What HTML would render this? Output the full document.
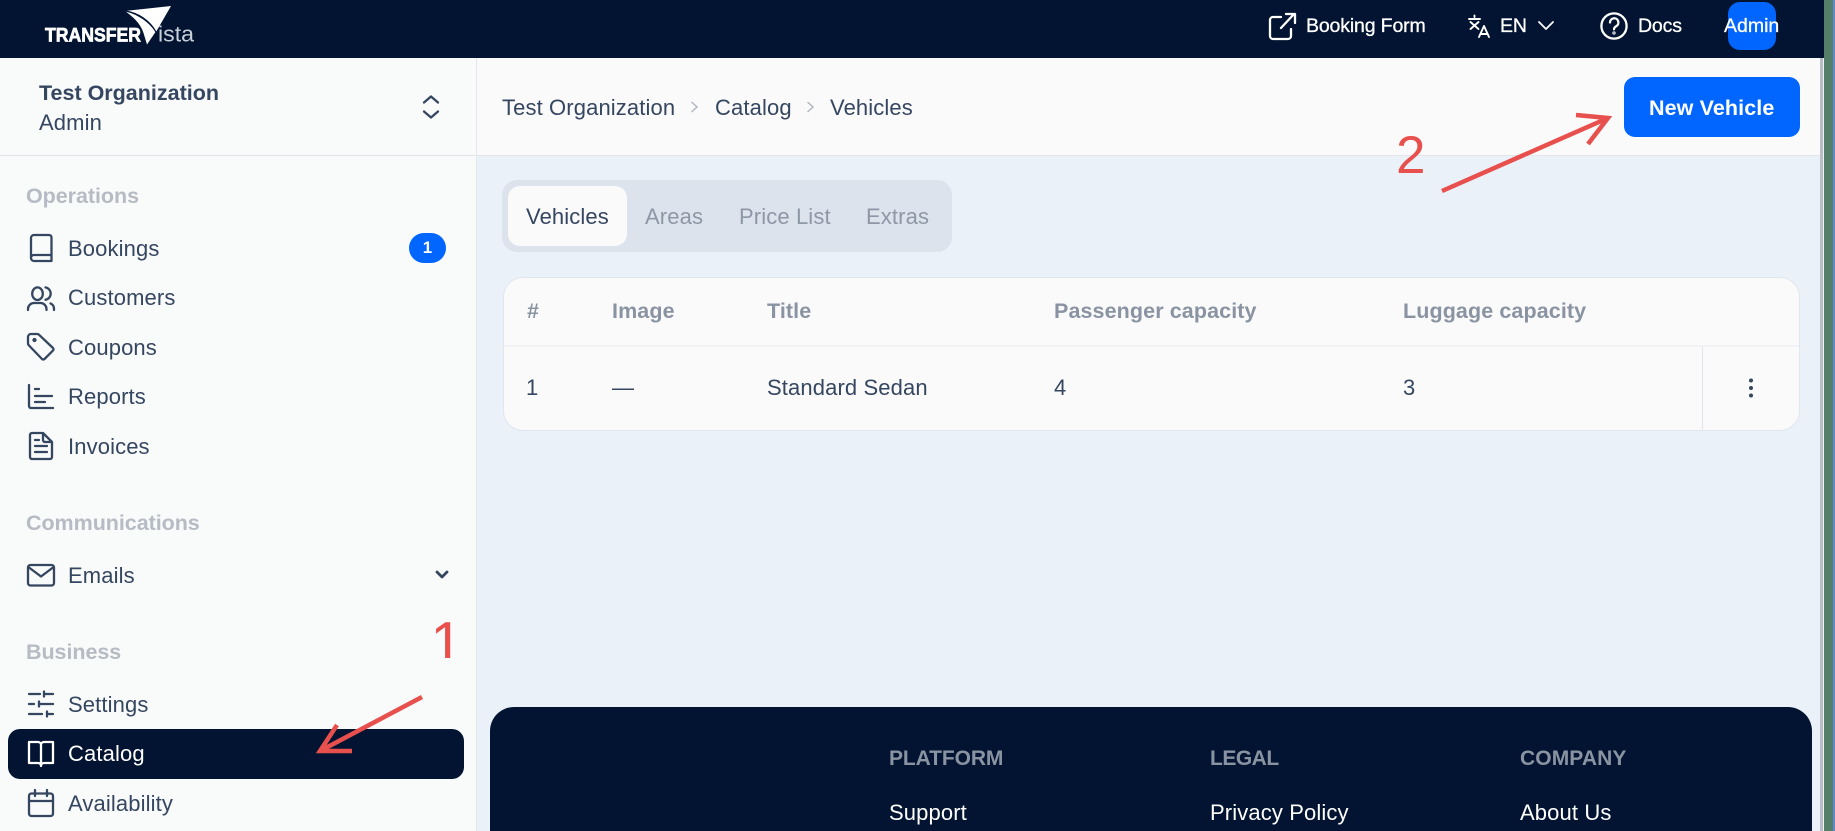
<!DOCTYPE html>
<html><head><meta charset="utf-8"><title>Vehicles</title>
<style>
html,body{margin:0;padding:0;width:1835px;height:831px;overflow:hidden;background:#ebf1f9}
body{position:relative;font-family:"Liberation Sans",sans-serif;color:#354660}
.a{position:absolute}
.t{position:absolute;white-space:nowrap;line-height:30px;height:30px;font-size:22px;letter-spacing:.12px;margin-top:1px}
.g{color:#b6bbc4;font-weight:700;font-size:21.5px;letter-spacing:-.05px}
.b{font-weight:700;font-size:21.5px;letter-spacing:.1px;color:#8a93a2}
.n{color:#8e97a6}
.m{-webkit-text-stroke:.3px #fff;font-size:19.5px;letter-spacing:-.15px}
.f{font-weight:700;color:#8a93a2;font-size:21px;letter-spacing:-.1px}
.w{color:#fff}
svg{position:absolute;overflow:visible}
.i{fill:none;stroke:#354660;stroke-width:2.3;stroke-linecap:round;stroke-linejoin:round}
.h{fill:none;stroke:#fff;stroke-width:2.3;stroke-linecap:round;stroke-linejoin:round}
</style></head><body>
<!-- main backgrounds -->
<div class="a" style="left:0;top:0;width:476px;height:831px;background:#f9fafa;border-right:1px solid #e4e8ee"></div>
<div class="a" style="left:477px;top:58px;width:1343px;height:97px;background:#fafafa;border-bottom:1px solid #e2e6ec"></div>
<div class="a" style="left:0;top:155px;width:476px;height:1px;background:#e2e6ec"></div>
<!-- header -->
<div class="a" style="left:0;top:0;width:1824px;height:58px;background:#021431"></div>
<!-- right edge -->
<div class="a" style="left:1820px;top:58px;width:3px;height:773px;background:#b9bec6"></div>
<div class="a" style="left:1823px;top:58px;width:1px;height:773px;background:#eef1f6"></div>
<div class="a" style="left:1824px;top:0;width:9px;height:831px;background:#54806a"></div>
<div class="a" style="left:1833px;top:0;width:2px;height:831px;background:#5f88cc"></div>
<!-- logo -->
<svg style="left:0;top:0" width="220" height="58" viewBox="0 0 220 58">
<path fill="#fff" d="M171 6 L125 11 C139 13 150 20 156 32 Z"/>
<path fill="#fff" d="M125 11 C135 18 141 25 143.5 33 L147 44.5 L155.5 32 C148 21 138 15 125 11 Z"/>
<path fill="none" stroke="#021431" stroke-width="1.3" d="M125 11 C139 13 150 21 156 32"/>
<text x="45" y="41.5" fill="#fff" font-family="Liberation Sans" font-weight="700" font-size="19" textLength="96" lengthAdjust="spacingAndGlyphs" stroke="#fff" stroke-width=".7">TRANSFER</text>
<text x="158" y="41.5" fill="#c9d0da" font-family="Liberation Sans" font-size="22" textLength="36" lengthAdjust="spacingAndGlyphs">ista</text>
</svg>
<!-- header right -->
<svg style="left:1267px;top:11px" width="30" height="30" viewBox="0 0 30 30" class="h"><path d="M14 6H6a3 3 0 0 0-3 3V25a3 3 0 0 0 3 3H21a3 3 0 0 0 3-3V18M14 17L27 3M19 3H28V12"/></svg>
<div class="t w m" style="left:1306px;top:10px">Booking Form</div>
<svg style="left:1466px;top:12px" width="28" height="28" viewBox="0 0 28 28" class="h"><path style="stroke-width:1.9" d="M3 7h11M8.5 3.5v1.5M4.5 10L12.5 17M12.5 10L4.5 17M13 25L18 14L23 25M14.5 22h7"/></svg>
<div class="t w m" style="left:1500px;top:10px">EN</div>
<svg style="left:1536px;top:18px" width="20" height="16" viewBox="0 0 20 16" class="h"><path style="stroke-width:1.8" d="M3 4L10 11L17 4"/></svg>
<svg style="left:1599px;top:11px" width="30" height="30" viewBox="0 0 30 30" class="h"><circle cx="15" cy="15" r="12.6"/><path d="M11 11.5a4.2 4.2 0 1 1 6.2 3.7c-1.5.9-2.2 1.6-2.2 3"/><circle cx="15" cy="22" r=".5"/></svg>
<div class="t w m" style="left:1638px;top:10px">Docs</div>
<div class="a" style="left:1728px;top:2px;width:48px;height:48px;border-radius:12px;background:#0066ff"></div>
<div class="t w m" style="left:1724px;top:10px;letter-spacing:0">Admin</div>
<!-- org -->
<div class="t" style="left:39px;top:77px;font-weight:700;font-size:21.5px;letter-spacing:0">Test Organization</div>
<div class="t" style="left:39px;top:107px">Admin</div>
<svg style="left:419px;top:92px" width="24" height="30" viewBox="0 0 24 30" class="i"><path d="M5 10.5L12 4.5L19 10.5M5 19.5L12 25.5L19 19.5"/></svg>
<!-- sidebar -->
<div class="t g" style="left:26px;top:180px">Operations</div>
<svg style="left:26px;top:233px" width="30" height="30" viewBox="0 0 30 30" class="i"><path d="M5 25V5a3 3 0 0 1 3-3H23a2.5 2.5 0 0 1 2.5 2.5V28H8a3 3 0 0 1-3-3a3 3 0 0 1 3-3H25.5"/></svg>
<div class="t" style="left:68px;top:233px">Bookings</div>
<div class="a" style="left:409px;top:233px;width:37px;height:30px;border-radius:15px;background:#0066ff;color:#fff;text-align:center;font-weight:700;font-size:17px;line-height:30px">1</div>
<svg style="left:26px;top:282px" width="30" height="30" viewBox="0 0 30 30" class="i"><ellipse cx="11.5" cy="11.7" rx="5.3" ry="6.3"/><path d="M2 28v-1a6 6 0 0 1 6-6h6.5a6 6 0 0 1 6 6v1M19.5 5.4a6.3 6.3 0 0 1 0 12.4M24.5 21.4a6 6 0 0 1 3.5 5.6v1"/></svg>
<div class="t" style="left:68px;top:282px">Customers</div>
<svg style="left:26px;top:332px" width="30" height="30" viewBox="0 0 30 30" class="i"><path d="M2 5a3 3 0 0 1 3-3h6a3 3 0 0 1 2.2.9L27 16a1.8 1.8 0 0 1 0 2.5L18.5 27a1.8 1.8 0 0 1-2.5 0L3 13.5a3 3 0 0 1-1-2.2z"/><circle cx="8.5" cy="8" r="1" fill="#354660"/></svg>
<div class="t" style="left:68px;top:332px">Coupons</div>
<svg style="left:26px;top:381px" width="30" height="30" viewBox="0 0 30 30" class="i"><path d="M3 4V25a2 2 0 0 0 2 2H27M9 8h4M9 15h17M9 21h10"/></svg>
<div class="t" style="left:68px;top:381px">Reports</div>
<svg style="left:26px;top:431px" width="30" height="30" viewBox="0 0 30 30" class="i"><path d="M6 2H17L26 11V26a2 2 0 0 1-2 2H6a2 2 0 0 1-2-2V4a2 2 0 0 1 2-2zM17 2V9a2 2 0 0 0 2 2H26M9 9h4M9 15h12M9 21h12"/></svg>
<div class="t" style="left:68px;top:431px">Invoices</div>
<div class="t g" style="left:26px;top:507px">Communications</div>
<svg style="left:26px;top:560px" width="30" height="30" viewBox="0 0 30 30" class="i"><rect x="2" y="5" width="26" height="20.5" rx="2.5"/><path d="M3 7.5L15 16.5L27 7.5"/></svg>
<div class="t" style="left:68px;top:560px">Emails</div>
<svg style="left:434px;top:568px" width="16" height="14" viewBox="0 0 16 14" class="i"><path style="stroke-width:2.8" d="M3 4L8 9L13 4"/></svg>
<div class="t g" style="left:26px;top:636px">Business</div>
<svg style="left:26px;top:689px" width="30" height="30" viewBox="0 0 30 30" class="i"><path d="M3 5H14M18 5H27M18 2.5V7.5M3 15H8M13 15H27M13 12.5V17.5M3 25H16M21 25H27M21 22.5V27.5"/></svg>
<div class="t" style="left:68px;top:689px">Settings</div>
<div class="a" style="left:8px;top:729px;width:456px;height:50px;border-radius:12px;background:#021431"></div>
<svg style="left:26px;top:739px" width="30" height="30" viewBox="0 0 30 30" class="h"><path d="M15 6a3 3 0 0 0-3-3H3V24H12a3 3 0 0 1 3 3a3 3 0 0 1 3-3H27V3H18a3 3 0 0 0-3 3zM15 6V27"/></svg>
<div class="t w" style="left:68px;top:738px">Catalog</div>
<svg style="left:26px;top:788px" width="30" height="30" viewBox="0 0 30 30" class="i"><rect x="3" y="5.5" width="24" height="22.5" rx="2.5"/><path d="M3 13H27M9 2V8M21 2V8"/></svg>
<div class="t" style="left:68px;top:788px">Availability</div>
<!-- breadcrumb -->
<div class="t" style="left:502px;top:92px">Test Organization</div>
<svg style="left:687px;top:99px" width="14" height="16" viewBox="0 0 14 16"><path d="M4.5 3L10 8L4.5 13" fill="none" stroke="#b0b7c2" stroke-width="1.5"/></svg>
<div class="t" style="left:715px;top:92px">Catalog</div>
<svg style="left:803px;top:99px" width="14" height="16" viewBox="0 0 14 16"><path d="M4.5 3L10 8L4.5 13" fill="none" stroke="#b0b7c2" stroke-width="1.5"/></svg>
<div class="t" style="left:830px;top:92px">Vehicles</div>
<!-- button -->
<div class="a" style="left:1624px;top:77px;width:176px;height:60px;border-radius:11px;background:#0066ff"></div>
<div class="t w" style="left:1649px;top:92px;font-weight:700;font-size:21.5px;letter-spacing:.1px">New Vehicle</div>
<!-- tabs -->
<div class="a" style="left:502px;top:180px;width:450px;height:72px;border-radius:15px;background:#dde3ed"></div>
<div class="a" style="left:508px;top:186px;width:119px;height:60px;border-radius:12px;background:#fafafa"></div>
<div class="t" style="left:526px;top:201px">Vehicles</div>
<div class="t n" style="left:645px;top:201px">Areas</div>
<div class="t n" style="left:739px;top:201px">Price List</div>
<div class="t n" style="left:866px;top:201px">Extras</div>
<!-- table -->
<div class="a" style="left:503px;top:277px;width:1295px;height:152px;border-radius:20px;background:#fafafa;border:1px solid #e1e6ee"></div>
<div class="a" style="left:504px;top:345px;width:1295px;height:2px;background:#f0f2f5"></div>
<div class="a" style="left:1702px;top:347px;width:1px;height:83px;background:#e1e5ea"></div>
<div class="t b" style="left:527px;top:295px">#</div>
<div class="t b" style="left:612px;top:295px">Image</div>
<div class="t b" style="left:767px;top:295px">Title</div>
<div class="t b" style="left:1054px;top:295px">Passenger capacity</div>
<div class="t b" style="left:1403px;top:295px">Luggage capacity</div>
<div class="t" style="left:526px;top:372px">1</div>
<div class="t" style="left:612px;top:372px">—</div>
<div class="t" style="left:767px;top:372px">Standard Sedan</div>
<div class="t" style="left:1054px;top:372px">4</div>
<div class="t" style="left:1403px;top:372px">3</div>
<svg style="left:1745px;top:376px" width="12" height="24" viewBox="0 0 12 24"><circle cx="6" cy="4.5" r="2" fill="#354660"/><circle cx="6" cy="12" r="2" fill="#354660"/><circle cx="6" cy="19.5" r="2" fill="#354660"/></svg>
<!-- footer -->
<div class="a" style="left:490px;top:707px;width:1322px;height:124px;border-radius:24px 24px 0 0;background:#021431"></div>
<div class="t f" style="left:889px;top:743px">PLATFORM</div>
<div class="t f" style="left:1210px;top:743px;letter-spacing:-.5px">LEGAL</div>
<div class="t f" style="left:1520px;top:743px;letter-spacing:.1px">COMPANY</div>
<div class="t w" style="left:889px;top:797px">Support</div>
<div class="t w" style="left:1210px;top:797px">Privacy Policy</div>
<div class="t w" style="left:1520px;top:797px">About Us</div>
<!-- annotations -->
<svg style="left:0;top:0" width="1835" height="831" viewBox="0 0 1835 831" fill="none" stroke="#e8504d" stroke-width="4.5">
<defs><clipPath id="c1"><rect x="420" y="610" width="50" height="48"/></clipPath></defs>
<path d="M422 697L320 751M337 725L320 751H352"/>
<path d="M1442 191L1608 118M1576 115L1608 118L1588 144"/>
<text x="430.5" y="662.5" clip-path="url(#c1)" fill="#e8504d" stroke="none" font-family="Liberation Sans" font-size="58">1</text>
<text x="1396" y="173" fill="#e8504d" stroke="none" font-family="Liberation Sans" font-size="53">2</text>
</svg>
</body></html>
